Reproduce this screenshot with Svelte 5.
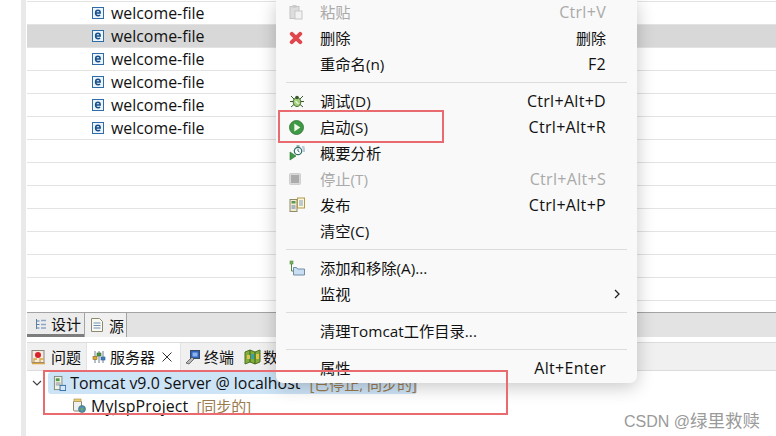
<script>
  const rows = Array.from({ length: 13 }, (_, i) => (i < 6 ? "welcome-file" : ""));

  const menu = [
    { icon: "paste", label: "粘贴", key: "Ctrl+V", off: true },
    { icon: "x", label: "删除", key: "删除", cjk: true },
    { label: "重命名(n)", key: "F2" },
    { sep: true },
    { icon: "bug", label: "调试(D)", key: "Ctrl+Alt+D" },
    { icon: "run", label: "启动(S)", key: "Ctrl+Alt+R" },
    { icon: "profile", label: "概要分析" },
    { icon: "stop", label: "停止(T)", key: "Ctrl+Alt+S", off: true },
    { icon: "publish", label: "发布", key: "Ctrl+Alt+P" },
    { label: "清空(C)" },
    { sep: true },
    { icon: "add", label: "添加和移除(A)..." },
    { label: "监视", more: true },
    { sep: true },
    { label: "清理Tomcat工作目录..." },
    { sep: true },
    { label: "属性", key: "Alt+Enter" }
  ];
</script>

<div class="page">
  <div class="gutter"></div>
  <div class="bar"></div>
  <div class="main">
    <div class="table">
      {#each rows as name, i}
        <div class="row" class:selected={i === 1}>
          {#if name}
            <svg class="e-icon" width="12" height="12" viewBox="0 0 12 12">
              <rect x="0.5" y="0.5" width="11" height="11" fill="#eef4fa" stroke="#2f6da8" />
              <path d="M3.700 5.900h4.500c0-1.700-.9-2.600-2.200-2.600S3.600 4.400 3.600 6s1 2.700 2.500 2.700c.9 0 1.500-.2 2-.6" fill="none" stroke="#164f8a" stroke-width="1.500" />
            </svg>
            <span>{name}</span>
          {/if}
        </div>
      {/each}
    </div>

    <div class="editor-tabs">
      <div class="etab design">
        <svg width="14" height="14" viewBox="0 0 14 14" fill="none" stroke="#5a7fa8">
          <path d="M2.500 2v10M2.500 4h3M2.500 7.500h3M2.500 11h3" />
          <path d="M7 3.500h5M7 7.500h5M7 11h5" stroke="#8aa6c4" stroke-width="1.500" />
        </svg>
        设计
      </div>
      <div class="etab source">
        <svg width="12" height="14" viewBox="0 0 12 14" fill="#fbfaf2" stroke="#8b8a70">
          <path d="M.5.500h8l3 3v10H.5z" />
          <path d="M2.500 5h7M2.500 7.500h7M2.500 10h7" stroke="#6f8fb5" fill="none" />
        </svg>
        源
      </div>
    </div>

    <div class="panel-tabs">
      <div class="ptab first">
        <svg width="15" height="16" viewBox="0 0 15 16">
          <rect x="1" y="1.500" width="12" height="12" fill="#f4ece0" stroke="#8f8578" />
          <circle cx="7" cy="6" r="3" fill="#d8232a" />
          <path d="M1 14.500h13M3 13V10h3M9 13V10h4" stroke="#d9a441" fill="none" stroke-width="1.300" />
        </svg>
        问题
      </div>
      <div class="ptab active">
        <svg width="14" height="14" viewBox="0 0 14 14" fill="none">
          <path d="M3 1v12M11 1v12M7 1v12" stroke="#6f7f8f" />
          <rect x="1" y="6.500" width="4" height="3" fill="#e0a52a" stroke="#8a6a1c" stroke-width=".6" />
          <rect x="5" y="3" width="4" height="3" fill="#4f9a45" stroke="#33692c" stroke-width=".6" />
          <rect x="9" y="7" width="4" height="3" fill="#3f7fc4" stroke="#2a5a8f" stroke-width=".6" />
        </svg>
        服务器
        <svg class="close" width="10" height="10" viewBox="0 0 10 10">
          <path d="M.5.500l9 9M9.500.500l-9 9" stroke="#333" stroke-width="1" />
        </svg>
      </div>
      <div class="ptab term">
        <svg width="16" height="16" viewBox="0 0 16 16">
          <rect x="5.500" y="1.500" width="9" height="8" fill="#2d62c0" stroke="#3a4a5f" />
          <rect x="7.500" y="3.500" width="5" height="4" fill="#89b4ee" />
          <path d="M1 14l6-6 2 2-5 5z" fill="#b8b8b8" stroke="#444" stroke-width=".7" />
        </svg>
        终端
      </div>
      <div class="ptab last">
        <svg width="18" height="16" viewBox="0 0 18 16">
          <path d="M1 3l5-2 5 2 5-2v12l-5 2-5-2-5 2z" fill="#7fae3c" stroke="#4f6f22" />
          <path d="M6 1v12M11 3v12" stroke="#3f5f1a" />
          <path d="M3 6h3v4H3zM12 5h3v5h-3z" fill="#e2c44a" />
          <path d="M7 5h3v5H7z" fill="#3aa3a8" />
        </svg>
        数
      </div>
    </div>

    <div class="tree">
      <div class="node server">
        <svg class="chev" width="10" height="6" viewBox="0 0 10 6">
          <path d="M1 1l4 4 4-4" fill="none" stroke="#444" stroke-width="1.200" />
        </svg>
        <div class="node-body">
          <svg width="14" height="17" viewBox="0 0 14 17">
            <rect x="1.500" y="1" width="8" height="14" fill="#f0f0ea" stroke="#7f8a7a" />
            <rect x="3" y="3" width="4" height="3" fill="#4f9a45" />
            <path d="M3 8h5M3 10h5" stroke="#888" />
            <rect x="7.500" y="10.500" width="6" height="5.500" fill="#d6e6f6" stroke="#2f6da8" />
          </svg>
          <span class="name">Tomcat v9.0 Server @ localhost</span>
          <span class="state">[已停止, 同步的]</span>
        </div>
      </div>
      <div class="node project">
        <svg width="14" height="15" viewBox="0 0 14 15">
          <rect x="1.500" y="3" width="8" height="10" rx="1" fill="#eef0f2" stroke="#8b8a70" />
          <rect x="2" y="1" width="7" height="2.500" fill="#e9cf7a" stroke="#a58a3a" stroke-width=".6" />
          <circle cx="10" cy="11" r="3.500" fill="#4f8fbf" stroke="#3a6a50" stroke-width=".6" />
          <path d="M8.500 10.500l2-1 1 2-2 1.500z" fill="#6fae4a" />
        </svg>
        <span class="name">MyJspProject</span>
        <span class="state">[同步的]</span>
      </div>
    </div>
  </div>

  <div class="menu">
    {#each menu as item}
      {#if item.sep}
        <div class="sep"></div>
      {:else}
        <div class="item" class:off={item.off}>
          <div class="slot">
            {#if item.icon === "paste"}
              <svg width="14" height="16" viewBox="0 0 14 16">
                <rect x="1" y="2.500" width="9" height="12" fill="#ddd" stroke="#c4c4c4" />
                <rect x="3.500" y="1" width="4" height="3" fill="#ccc" />
                <rect x="6" y="7" width="7" height="8" fill="#f2f2f2" stroke="#c8c8c8" />
              </svg>
            {:else if item.icon === "x"}
              <svg width="14" height="14" viewBox="0 0 14 14">
                <path d="M2.800 2.800l8.400 8.400M11.200 2.800l-8.400 8.400" stroke="#e0474c" stroke-width="4" stroke-linecap="round" />
              </svg>
            {:else if item.icon === "bug"}
              <svg width="16" height="16" viewBox="0 0 16 16" fill="none" stroke="#39592f">
                <path d="M2 3l3 3M14 3l-3 3M1 8.500h3M15 8.500h-3M2 14l3-2.500M14 14l-3-2.500" />
                <ellipse cx="8" cy="9" rx="3.800" ry="4.500" fill="#a4cf7a" stroke="#3f6b34" />
                <circle cx="8" cy="4.500" r="1.800" fill="#39592f" stroke="none" />
                <path d="M6.500 8l3 3" stroke="#e8f3d8" stroke-width="1.400" />
              </svg>
            {:else if item.icon === "run"}
              <svg width="15" height="15" viewBox="0 0 15 15">
                <circle cx="7.500" cy="7.500" r="7" fill="#3f9a45" stroke="#2d6f33" stroke-width=".8" />
                <path d="M5.300 3.500l6 4-6 4z" fill="#f3f8ec" />
              </svg>
            {:else if item.icon === "profile"}
              <svg width="16" height="16" viewBox="0 0 16 16" fill="none">
                <circle cx="9" cy="6" r="3.700" fill="#fff" stroke="#2f6f6a" stroke-width="1.200" />
                <path d="M9 3.800V6l1.500 1M7.500 1h3" stroke="#2f6f6a" />
                <path d="M13 2h2.500M13.500 4H16M13.500 6H16" stroke="#7f9fbf" />
                <path d="M1 7v8l6-4z" fill="#3f9a45" stroke="#2d6f33" stroke-width=".6" />
              </svg>
            {:else if item.icon === "stop"}
              <svg width="12" height="12" viewBox="0 0 12 12">
                <rect x=".5" y=".5" width="11" height="11" rx="1" fill="#d8d8d8" stroke="#cfcfcf" />
                <rect x="2" y="2" width="8" height="8" fill="#ababab" />
              </svg>
            {:else if item.icon === "publish"}
              <svg width="16" height="16" viewBox="0 0 16 16">
                <rect x="1" y="2.500" width="7" height="12" fill="#f1ecd6" stroke="#8f8a6a" />
                <rect x="2.500" y="4" width="4" height="2.500" fill="#5a9a50" />
                <path d="M2.500 9h4M2.500 11h4" stroke="#5a7fa8" />
                <rect x="8.500" y="1" width="7" height="10" fill="#fbf6dc" stroke="#b59a4a" />
                <path d="M10 4h4M10 6h4M10 8h4" stroke="#7f9fbf" />
              </svg>
            {:else if item.icon === "add"}
              <svg width="16" height="16" viewBox="0 0 16 16">
                <path d="M2.500 1v10h3" fill="none" stroke="#4f8a3f" />
                <rect x="1" y="1" width="3" height="3" fill="#7fb35a" stroke="#4f8a3f" stroke-width=".6" />
                <path d="M4.500 7.500h3l1 1.500h7v6h-11z" fill="#c9def2" stroke="#6f8fa8" />
              </svg>
            {/if}
          </div>
          <span class="label">{item.label}</span>
          {#if item.key}<span class="key" class:cjk={item.cjk}>{item.key}</span>{/if}
          {#if item.more}
            <svg class="more" width="6" height="10" viewBox="0 0 6 10">
              <path d="M1 1l4 4-4 4" fill="none" stroke="#222" stroke-width="1.300" />
            </svg>
          {/if}
        </div>
      {/if}
    {/each}
  </div>

  <div class="mark mark-run"></div>
  <div class="mark mark-server"></div>
  <div class="watermark">CSDN @<span>绿里救赎</span></div>
</div>

<style>
  :global(body) {
    margin: 0;
  }

  .page {
    position: relative;
    display: flex;
    width: 776px;
    height: 436px;
    overflow: hidden;
    background: #fff;
    color: #111;
    font-family: "Open Sans", "Noto Sans CJK SC", sans-serif;
    font-size: 15px;
  }

  .gutter {
    width: 21px;
    flex: none;
  }

  .bar {
    width: 5px;
    flex: none;
    background: #e9e9e9;
    margin-right: 1px;
  }

  .main {
    flex: 1;
    min-width: 0;
    display: flex;
    flex-direction: column;
  }

  .table {
    flex: none;
    margin-top: 1px;
    border-top: 1px solid #e3e3e3;
  }

  .row {
    height: 22px;
    border-bottom: 1px solid #e3e3e3;
    display: flex;
    align-items: center;
    padding-left: 65px;
    gap: 7px;
    font-size: 15.900px;
    line-height: 22px;
  }

  .row.selected {
    background: #d8d8d8;
  }

  .e-icon {
    flex: none;
  }

  .editor-tabs {
    height: 24px;
    margin-top: 11px;
    display: flex;
    background: #e3e3e3;
    border-top: 1px solid #a3a3a3;
  }

  .etab {
    display: flex;
    align-items: center;
    box-sizing: border-box;
  }

  .etab svg,
  .ptab svg {
    flex: none;
  }

  .design {
    width: 57px;
    gap: 3px;
    padding-left: 7px;
    background: #ececec;
    border-bottom: 3px solid #7d7d7d;
  }

  .source {
    width: 43px;
    gap: 6px;
    padding-left: 6px;
    background: #f0f0f0;
    border-left: 1px solid #a3a3a3;
    border-right: 1px solid #a3a3a3;
  }

  .panel-tabs {
    height: 27px;
    margin-top: 5px;
    display: flex;
    background: #f0f0f0;
    border-top: 1px solid #dcdcdc;
    border-bottom: 1px solid #dcdcdc;
  }

  .ptab {
    display: flex;
    align-items: center;
    gap: 5px;
    padding: 0 8px 0 4px;
    box-sizing: border-box;
    white-space: nowrap;
  }

  .ptab.first {
    width: 59px;
    padding-right: 0;
  }

  .ptab.active {
    width: 95px;
    gap: 4px;
    padding: 0 0 0 5px;
    background: #fff;
    border-left: 1px solid #e3e3e3;
    border-right: 1px solid #e3e3e3;
  }

  .ptab.term {
    gap: 3px;
  }

  .ptab.last {
    gap: 1px;
    padding-left: 2px;
  }

  .close {
    margin-left: 3px;
  }

  .tree {
    flex: 1;
    padding-top: 1px;
  }

  .node {
    display: flex;
    align-items: center;
    height: 22px;
    white-space: nowrap;
  }

  .chev {
    margin: 0 6px 0 5px;
    flex: none;
  }

  .name {
    font-size: 15.900px;
  }

  .node-body {
    width: 369px;
    height: 22px;
    flex: none;
    display: flex;
    align-items: center;
    gap: 4px;
    padding-left: 5px;
    box-sizing: border-box;
    background: #cde4f7;
    border-radius: 3px;
  }

  .node-body .state {
    margin-left: 5px;
  }

  .project {
    height: 23px;
    padding-left: 45px;
    gap: 5px;
  }

  .project .name {
    letter-spacing: 0.15px;
  }

  .state {
    color: #9a7b4f;
  }

  .project .state {
    margin-left: 3px;
  }

  .menu {
    position: absolute;
    left: 276px;
    top: -1px;
    width: 361px;
    box-sizing: border-box;
    padding-bottom: 2px;
    background: #f9f9f9;
    border-radius: 0 0 7px 7px;
    box-shadow: 0 4px 18px rgba(0, 0, 0, 0.22);
  }

  .item {
    height: 26px;
    display: flex;
    align-items: center;
    padding-right: 31px;
    white-space: nowrap;
  }

  .item.off {
    color: #aaa;
  }

  .slot {
    width: 44px;
    flex: none;
    display: flex;
    align-items: center;
    padding-left: 13px;
    box-sizing: border-box;
  }

  .label {
    flex: 1;
    font-size: 15.300px;
    margin-top: -2px;
  }

  .key {
    font-size: 16px;
    letter-spacing: 0.3px;
  }

  .key.cjk {
    font-size: 15px;
    letter-spacing: 0;
    margin-top: -2px;
  }

  .more {
    margin-right: -14px;
  }

  .sep {
    height: 1px;
    margin: 5px 10px;
    background: #dcdcdc;
  }

  .mark {
    position: absolute;
    box-sizing: border-box;
    border: 2px solid #e96b6f;
    pointer-events: none;
  }

  .mark-run {
    left: 278px;
    top: 110px;
    width: 166px;
    height: 33px;
  }

  .mark-server {
    left: 43px;
    top: 370px;
    width: 465px;
    height: 45px;
  }

  .watermark {
    position: absolute;
    left: 624px;
    top: 407px;
    color: #9a9a9a;
    font-family: "Liberation Sans", "Noto Sans CJK SC", sans-serif;
    font-size: 16px;
    white-space: nowrap;
  }

  .watermark span {
    font-size: 17.500px;
  }
</style>
